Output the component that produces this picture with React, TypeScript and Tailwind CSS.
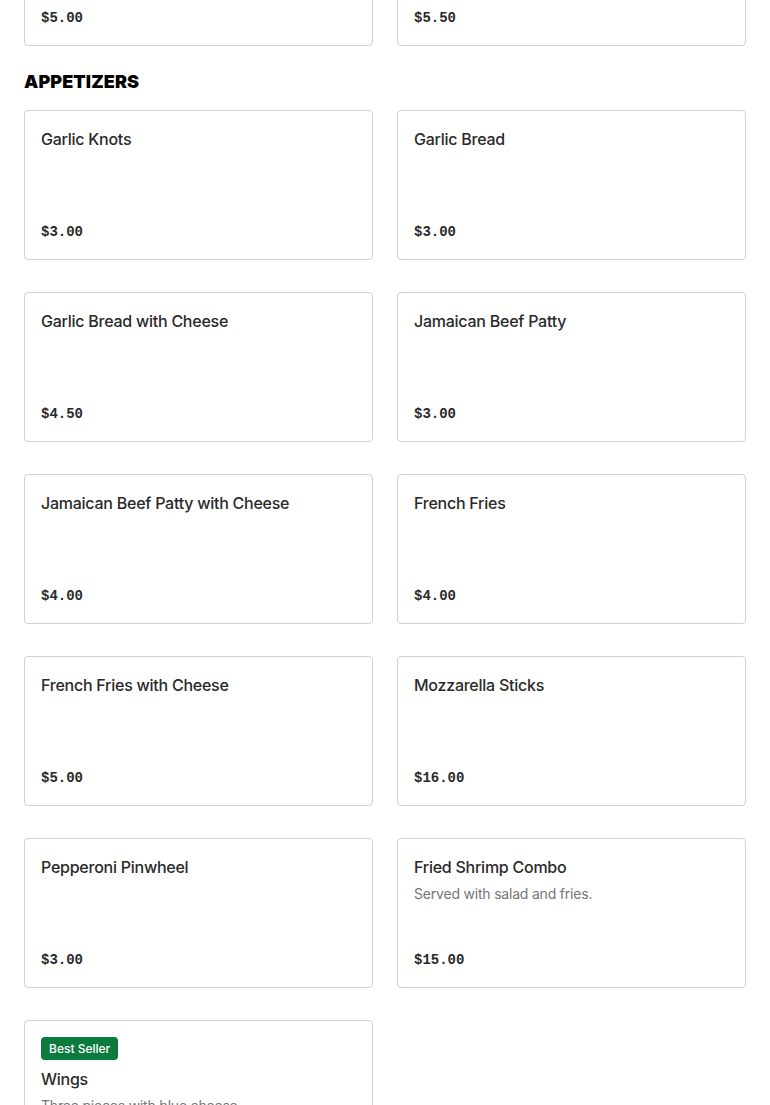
import React from "react";

type Item = { name: string; price: string; desc?: string; badge?: string };

const items: Item[] = [
  { name: "Garlic Knots", price: "$3.00" },
  { name: "Garlic Bread", price: "$3.00" },
  { name: "Garlic Bread with Cheese", price: "$4.50" },
  { name: "Jamaican Beef Patty", price: "$3.00" },
  { name: "Jamaican Beef Patty with Cheese", price: "$4.00" },
  { name: "French Fries", price: "$4.00" },
  { name: "French Fries with Cheese", price: "$5.00" },
  { name: "Mozzarella Sticks", price: "$16.00" },
  { name: "Pepperoni Pinwheel", price: "$3.00" },
  { name: "Fried Shrimp Combo", price: "$15.00", desc: "Served with salad and fries." },
  { name: "Wings", price: "$12.00", desc: "Three pieces with blue cheese.", badge: "Best Seller" },
];

function Card({ item }: { item: Item }) {
  return (
    <div className="flex h-[150px] flex-col rounded-[4px] border border-[#d0d0d0] bg-white px-4 py-4">
      {item.badge && (
        <div className="mb-[7px] self-start rounded-[4px] bg-[#0b7a3e] px-2 text-[12px] leading-[23px] font-medium text-white">
          {item.badge}
        </div>
      )}
      <div className="text-[16px] leading-[24px] font-medium tracking-[-0.25px] text-[#2a2a2a]">
        {item.name}
      </div>
      {item.desc && (
        <div className="mt-[5px] text-[14px] leading-[20px] tracking-[-0.2px] text-[#767676]">{item.desc}</div>
      )}
      <div className="mt-auto translate-y-[1px] font-['Liberation_Mono',monospace] text-[14px] leading-[24px] font-bold text-[#2a2a2a]">
        {item.price}
      </div>
    </div>
  );
}

export default function App() {
  return (
    <div className="h-[1105px] overflow-hidden bg-white px-6 font-['Inter',sans-serif]">
      <div className="mt-[-104px] grid grid-cols-2 gap-6">
        <Card item={{ name: "Soda", price: "$5.00" }} />
        <Card item={{ name: "Juice", price: "$5.50" }} />
      </div>
      <h2 className="mt-[24px] mb-[16px] text-[18px] leading-[24px] font-black tracking-[0.1px] text-black">
        APPETIZERS
      </h2>
      <div className="grid grid-cols-2 gap-x-6 gap-y-8">
        {items.map((it) => (
          <Card key={it.name} item={it} />
        ))}
      </div>
    </div>
  );
}
